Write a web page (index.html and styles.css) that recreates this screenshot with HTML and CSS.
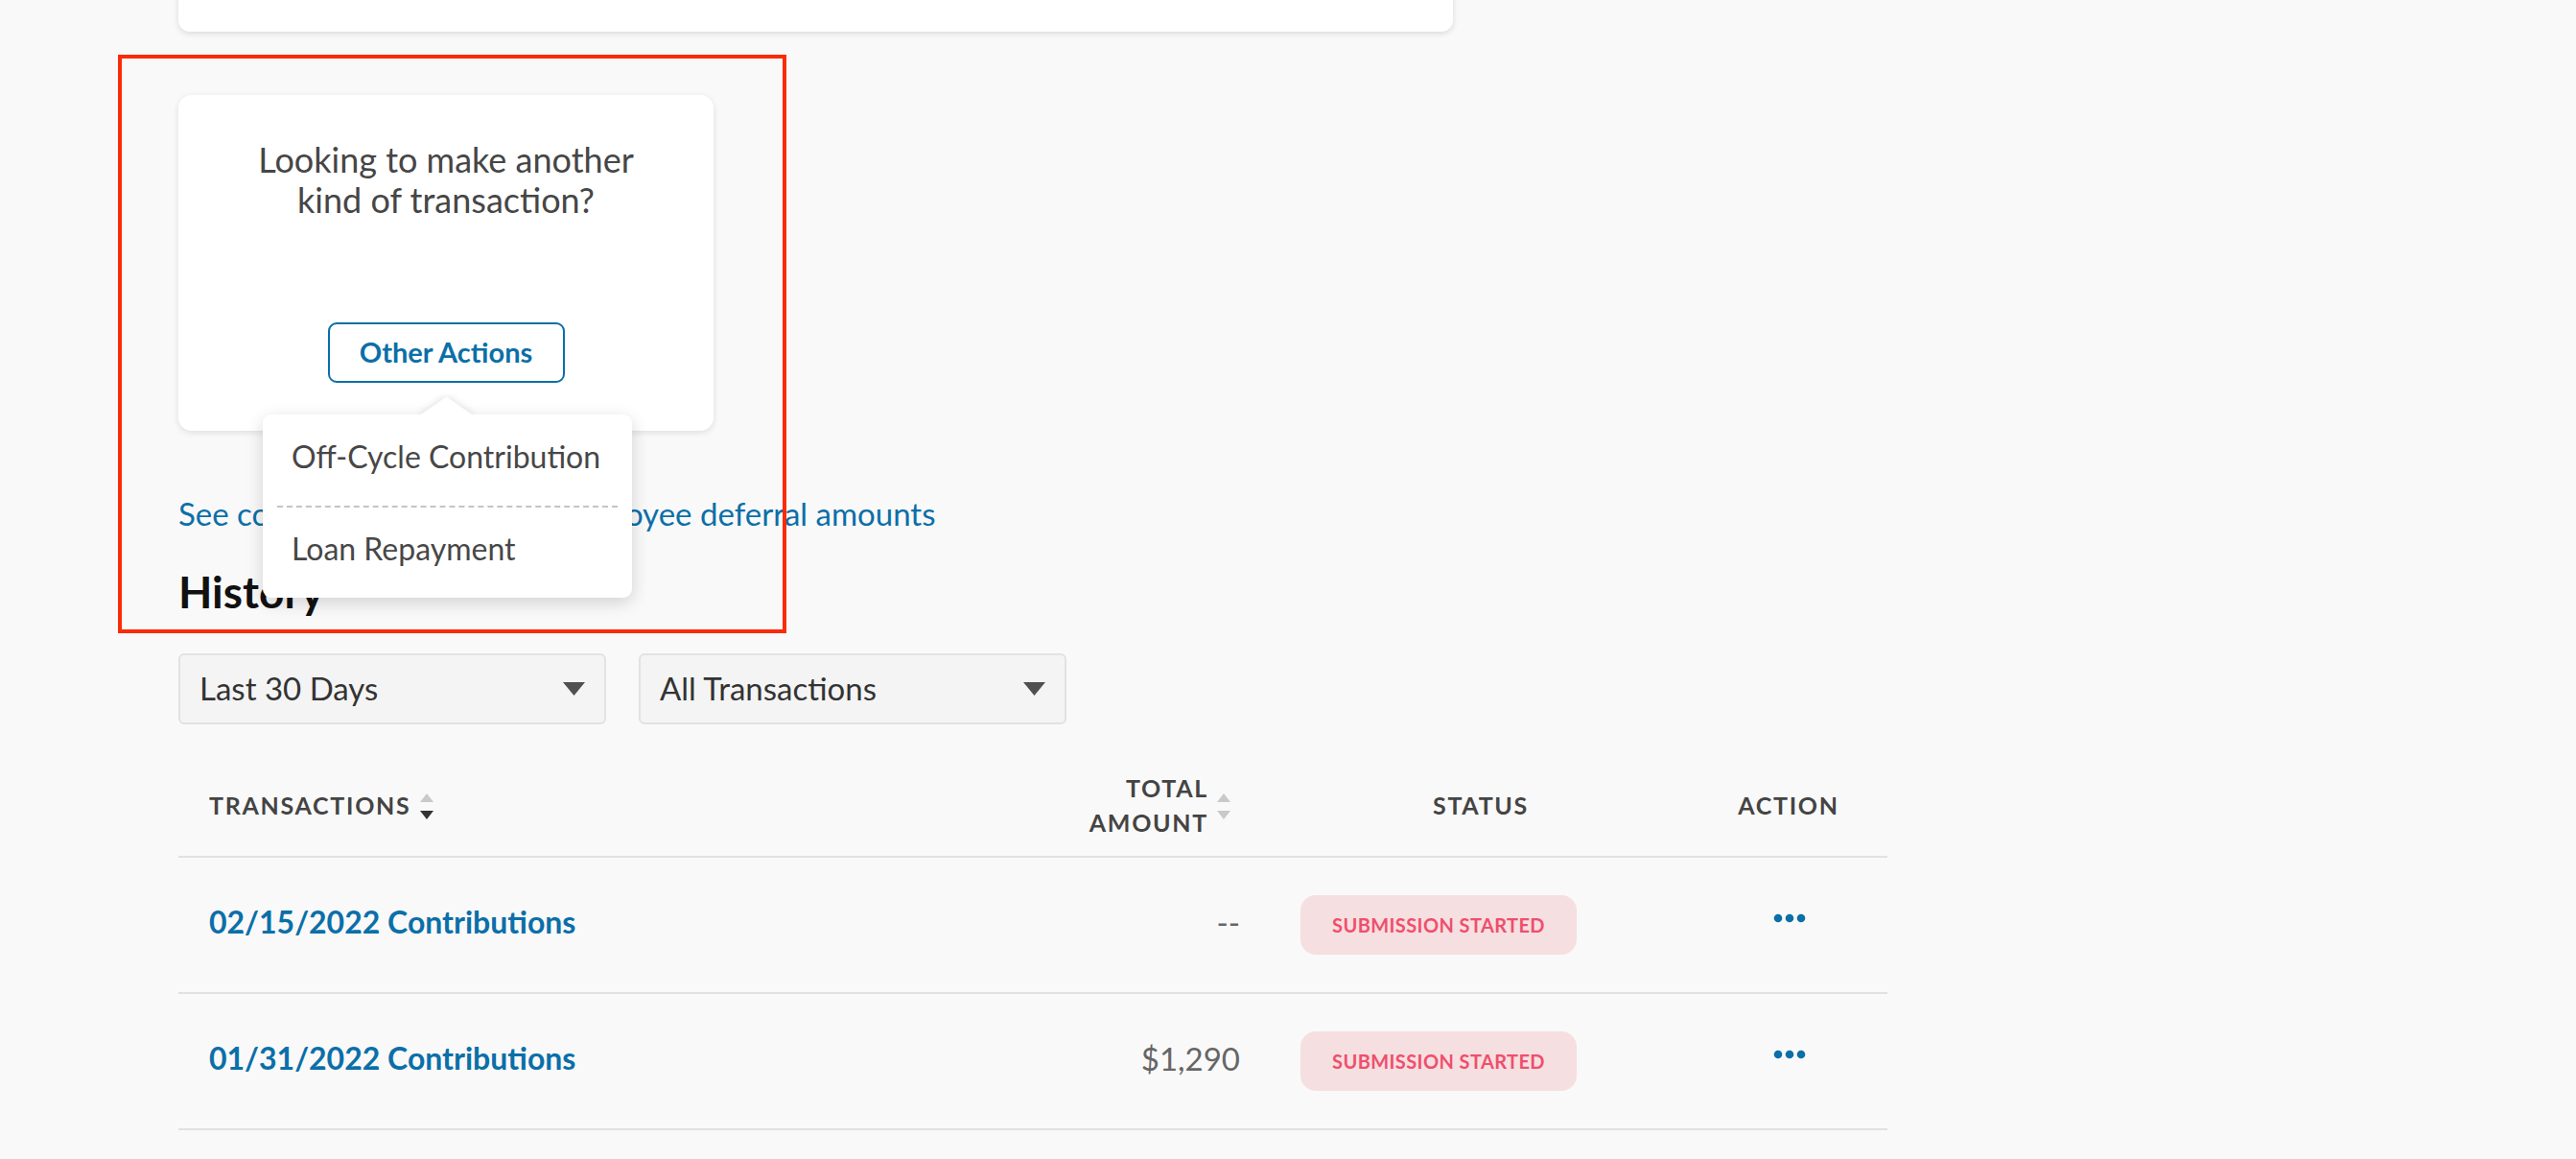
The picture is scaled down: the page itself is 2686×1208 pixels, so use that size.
FILE: index.html
```html
<!DOCTYPE html>
<html lang="en">
<head>
<meta charset="utf-8">
<title>Contributions</title>
<link rel="stylesheet" href="styles.css">
</head>
<body>
<div class="page">
  <div class="top-card"></div>

  <div class="action-wrap">
    <div class="action-card">
      <p class="action-question">Looking to make another<br>kind of transaction?</p>
      <button class="btn-outline" type="button">Other Actions</button>
    </div>
    <div class="popover">
      <div class="popover-arrow"><span></span></div>
      <div class="popover-item">Off-Cycle Contribution</div>
      <div class="popover-divider"></div>
      <div class="popover-item">Loan Repayment</div>
    </div>
  </div>

  <a class="limits-link" href="#">See contribution limits and employee deferral amounts</a>

  <h2 class="history-title">History</h2>

  <div class="filters">
    <div class="select">
      <span>Last 30 Days</span>
      <svg class="caret" width="23" height="14" viewBox="0 0 23 14"><polygon points="0,0 23,0 11.5,14" fill="#505050"/></svg>
    </div>
    <div class="select">
      <span>All Transactions</span>
      <svg class="caret" width="23" height="14" viewBox="0 0 23 14"><polygon points="0,0 23,0 11.5,14" fill="#505050"/></svg>
    </div>
  </div>

  <div class="table">
    <div class="t-row t-head">
      <div class="cell c-name">
        <span>TRANSACTIONS</span>
        <svg class="sort" width="14" height="28" viewBox="0 0 14 28"><polygon points="0,9 7,0 14,9" fill="#c9c9c9"/><polygon points="0,18 14,18 7,27" fill="#333"/></svg>
      </div>
      <div class="cell c-amount">
        <span class="two-line">TOTAL<br>AMOUNT</span>
        <svg class="sort" width="14" height="28" viewBox="0 0 14 28"><polygon points="0,9 7,0 14,9" fill="#c9c9c9"/><polygon points="0,18 14,18 7,27" fill="#c9c9c9"/></svg>
      </div>
      <div class="cell c-status-h">STATUS</div>
      <div class="cell c-action">ACTION</div>
    </div>

    <div class="t-row">
      <div class="cell c-name"><a class="row-link" href="#">02/15/2022 Contributions</a></div>
      <div class="cell c-amount amount">--</div>
      <div class="cell c-status"><span class="badge">SUBMISSION STARTED</span></div>
      <div class="cell c-action">
        <svg class="dots" width="34" height="10" viewBox="0 0 34 10"><circle cx="5" cy="5" r="4.3" fill="#0b6fa8"/><circle cx="17" cy="5" r="4.3" fill="#0b6fa8"/><circle cx="29" cy="5" r="4.3" fill="#0b6fa8"/></svg>
      </div>
    </div>

    <div class="t-row">
      <div class="cell c-name"><a class="row-link" href="#">01/31/2022 Contributions</a></div>
      <div class="cell c-amount amount">$1,290</div>
      <div class="cell c-status"><span class="badge">SUBMISSION STARTED</span></div>
      <div class="cell c-action">
        <svg class="dots" width="34" height="10" viewBox="0 0 34 10"><circle cx="5" cy="5" r="4.3" fill="#0b6fa8"/><circle cx="17" cy="5" r="4.3" fill="#0b6fa8"/><circle cx="29" cy="5" r="4.3" fill="#0b6fa8"/></svg>
      </div>
    </div>
  </div>
</div>

<div class="annotation"></div>
</body>
</html>
```

FILE: styles.css
```css
* { box-sizing: border-box; }

html, body {
  margin: 0;
  padding: 0;
}

body {
  background: #f9f9f9;
  font-family: Lato, "Open Sans", "Liberation Sans", sans-serif;
  color: #444;
  position: relative;
  min-height: 1208px;
  overflow: hidden;
}

.page {
  padding-left: 186px;
}

.top-card {
  width: 1329px;
  height: 60px;
  margin-top: -27px;
  background: #fff;
  border-radius: 12px;
  box-shadow: 0 2px 6px rgba(0, 0, 0, 0.13);
}

.action-wrap {
  position: relative;
  width: 558px;
  margin-top: 66px;
}

.action-card {
  background: #fff;
  border-radius: 14px;
  box-shadow: 0 2px 7px rgba(0, 0, 0, 0.11);
  height: 350px;
  padding-top: 46px;
  display: flex;
  flex-direction: column;
  align-items: center;
}

.action-question {
  margin: 0;
  font-size: 36px;
  line-height: 42px;
  text-align: center;
  color: #464646;
}

.btn-outline {
  margin-top: 107px;
  width: 247px;
  height: 63px;
  border: 2px solid #0b6fa8;
  border-radius: 9px;
  background: #fff;
  color: #0b6fa8;
  font-family: inherit;
  font-weight: 700;
  font-size: 29px;
  padding: 0 0 2px;
}

.popover {
  position: absolute;
  left: 88px;
  top: 333px;
  width: 385px;
  background: #fff;
  border-radius: 9px;
  box-shadow: 0 5px 18px rgba(0, 0, 0, 0.16);
  z-index: 2;
}

.popover-arrow {
  position: absolute;
  top: -22px;
  left: 151px;
  width: 80px;
  height: 22px;
  overflow: hidden;
}

.popover-arrow span {
  position: absolute;
  left: 20.5px;
  top: 2.5px;
  width: 39px;
  height: 39px;
  background: #fff;
  transform: scaleY(0.69) rotate(45deg);
  box-shadow: 0 0 10px rgba(0, 0, 0, 0.14);
}

.popover-item {
  padding: 24px 20px 31px 30px;
  font-size: 32px;
  line-height: 40px;
  color: #474747;
}

.popover-item + .popover-divider + .popover-item {
  padding-top: 23px;
}

.popover-divider {
  margin: 0 15px;
  border-top: 2px dashed #c4c4c4;
}

.limits-link {
  display: block;
  margin-top: 66px;
  font-size: 33px;
  line-height: 40px;
  color: #0b6fa8;
  text-decoration: none;
}

.history-title {
  margin: 34px 0 0;
  font-size: 46px;
  line-height: 56px;
  font-weight: 700;
  color: #111;
}

.filters {
  display: flex;
  gap: 34px;
  margin-top: 36px;
}

.select {
  width: 446px;
  height: 74px;
  background: #f4f4f4;
  border: 2px solid #e2e2e2;
  border-radius: 6px;
  display: flex;
  align-items: center;
  justify-content: space-between;
  padding: 0 20px 3px 20px;
  font-size: 33px;
  line-height: 38px;
  color: #333;
}

.caret {
  display: block;
  margin-top: 3px;
}

.table {
  width: 1782px;
  margin-top: 30px;
}

.t-row {
  display: grid;
  grid-template-columns: 914px 226px 436px 206px;
  height: 142px;
  border-bottom: 2px solid #e1e1e1;
}

.t-head {
  height: 109px;
}

.cell {
  display: flex;
  align-items: center;
}

.t-head .cell {
  font-size: 25px;
  font-weight: 700;
  letter-spacing: 1.7px;
  color: #444;
  line-height: 36px;
}

.c-name {
  padding-left: 32px;
  gap: 10px;
}

.c-amount {
  justify-content: flex-end;
  padding-right: 33px;
}

.t-head .c-amount {
  padding-right: 43px;
  gap: 9px;
}

.two-line {
  text-align: right;
}

.c-status-h,
.c-action {
  justify-content: center;
}

.c-status {
  padding-left: 30px;
}

.sort {
  display: block;
  margin-top: 4px;
}

.row-link {
  font-size: 32px;
  line-height: 38px;
  font-weight: 700;
  color: #0b6fa8;
  text-decoration: none;
  padding-bottom: 6px;
}

.amount {
  font-size: 33px;
  line-height: 38px;
  color: #666;
  padding-bottom: 6px;
}

.badge {
  display: flex;
  align-items: center;
  justify-content: center;
  width: 288px;
  height: 62px;
  border-radius: 16px;
  background: #f6dfe0;
  color: #ef4f6d;
  font-size: 20px;
  font-weight: 700;
  letter-spacing: 0.4px;
}

.dots {
  display: block;
  margin-bottom: 14px;
  margin-left: 2px;
}

.annotation {
  position: absolute;
  left: 123px;
  top: 57px;
  width: 697px;
  height: 603px;
  border: 4px solid #fb2b08;
  pointer-events: none;
}
```
